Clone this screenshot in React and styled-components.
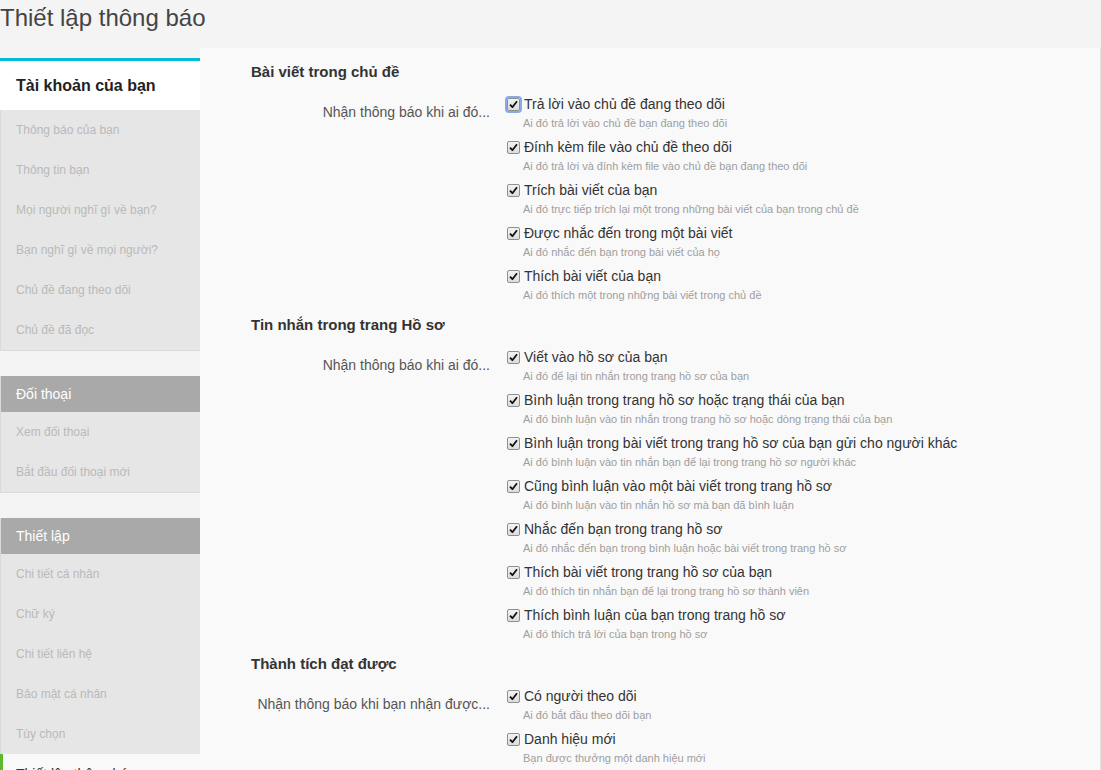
import React from "react";
import styled, { createGlobalStyle } from "styled-components";

const Global = createGlobalStyle`
  html, body { margin: 0; padding: 0; background: #f4f4f4; }
  body { font-family: "Liberation Sans", Arial, sans-serif; color: #333; }
`;

const Page = styled.div`
  width: 1101px;
`;

const Title = styled.h1`
  margin: 0;
  height: 48px;
  font-size: 24px;
  line-height: 36px;
  font-weight: normal;
  color: #444;
`;

const Body = styled.div`
  display: flex;
  align-items: flex-start;
`;

const Sidebar = styled.nav`
  width: 200px;
  flex: none;
  margin-top: 10px;
  display: flex;
  flex-direction: column;
  gap: 25px;
`;

const Group = styled.div`
  border-left: 1px solid #dadada;
  border-bottom: 1px solid #dadada;
  background: #e6e6e6;
`;

const TopTab = styled.div`
  background: #fff;
  border-top: 3px solid #00bcd4;
  height: 49px;
  line-height: 49px;
  font-size: 16px;
  font-weight: bold;
  color: #222;
  margin-left: -1px;
  padding-left: 16px;
`;

const GroupHeader = styled.div`
  background: #a9a9a9;
  height: 36px;
  line-height: 36px;
  padding-left: 15px;
  font-size: 14px;
  color: #fff;
`;

const NavItem = styled.div`
  height: 40px;
  line-height: 40px;
  color: ${(p) => (p.$active ? "#333" : "#b9b9b9")};
  background: ${(p) => (p.$active ? "#f9f9f9" : "transparent")};
  border-left: ${(p) => (p.$active ? "3px solid #5cb82e" : "none")};
  margin-left: ${(p) => (p.$active ? "-1px" : "0")};
  padding-left: ${(p) => (p.$active ? "13px" : "15px")};
  font-size: ${(p) => (p.$active ? "14px" : "12px")};
`;

const Content = styled.main`
  flex: 1;
  background: #f9f9f9;
  border-right: 1px solid #e3e3e3;
  min-height: 760px;
  padding-top: 3px;
`;

const Section = styled.section`
  padding-top: 11px;
`;

const SectionTitle = styled.h3`
  margin: 0 0 13px 51px;
  font-size: 15px;
  line-height: 20px;
  font-weight: bold;
  color: #333;
`;

const Row = styled.div`
  display: grid;
  grid-template-columns: 290px 1fr;
  column-gap: 17px;
`;

const RowLabel = styled.div`
  text-align: right;
  font-size: 14px;
  line-height: 18px;
  padding-top: 8px;
  color: #555;
`;

const Options = styled.div`
  display: flex;
  flex-direction: column;
  gap: 6px;
`;

const Option = styled.div`
  display: flex;
  flex-direction: column;
`;

const OptionLine = styled.label`
  display: flex;
  align-items: center;
  gap: 4px;
  font-size: 14px;
  line-height: 18px;
  color: #333;
`;

const Box = styled.span`
  width: 11px;
  height: 11px;
  flex: none;
  border: 1px solid #8e8f8f;
  border-radius: 2px;
  background: linear-gradient(#f3f3f3, #dcdcdc);
  display: flex;
  align-items: center;
  justify-content: center;
  box-shadow: ${(p) => (p.$focus ? "0 0 0 2px #86abe6" : "none")};
`;

const Hint = styled.div`
  margin-top: 2px;
  padding-left: 16px;
  font-size: 11px;
  line-height: 17px;
  color: #9e9e9e;
`;

const Check = () => (
  <svg width="9" height="9" viewBox="0 0 9 9">
    <path d="M1 4.6 L3.4 7.2 L8 1.2" fill="none" stroke="#111" strokeWidth="1.8" strokeLinejoin="round" />
  </svg>
);

const sections = [
  {
    title: "Bài viết trong chủ đề",
    label: "Nhận thông báo khi ai đó...",
    options: [
      ["Trả lời vào chủ đề đang theo dõi", "Ai đó trả lời vào chủ đề bạn đang theo dõi"],
      ["Đính kèm file vào chủ đề theo dõi", "Ai đó trả lời và đính kèm file vào chủ đề bạn đang theo dõi"],
      ["Trích bài viết của bạn", "Ai đó trực tiếp trích lại một trong những bài viết của bạn trong chủ đề"],
      ["Được nhắc đến trong một bài viết", "Ai đó nhắc đến bạn trong bài viết của họ"],
      ["Thích bài viết của bạn", "Ai đó thích một trong những bài viết trong chủ đề"],
    ],
  },
  {
    title: "Tin nhắn trong trang Hồ sơ",
    label: "Nhận thông báo khi ai đó...",
    options: [
      ["Viết vào hồ sơ của bạn", "Ai đó để lại tin nhắn trong trang hồ sơ của bạn"],
      ["Bình luận trong trang hồ sơ hoặc trạng thái của bạn", "Ai đó bình luận vào tin nhắn trong trang hồ sơ hoặc dòng trạng thái của bạn"],
      ["Bình luận trong bài viết trong trang hồ sơ của bạn gửi cho người khác", "Ai đó bình luận vào tin nhắn bạn để lại trong trang hồ sơ người khác"],
      ["Cũng bình luận vào một bài viết trong trang hồ sơ", "Ai đó bình luận vào tin nhắn hồ sơ mà bạn đã bình luận"],
      ["Nhắc đến bạn trong trang hồ sơ", "Ai đó nhắc đến bạn trong bình luận hoặc bài viết trong trang hồ sơ"],
      ["Thích bài viết trong trang hồ sơ của bạn", "Ai đó thích tin nhắn bạn để lại trong trang hồ sơ thành viên"],
      ["Thích bình luận của bạn trong trang hồ sơ", "Ai đó thích trả lời của bạn trong hồ sơ"],
    ],
  },
  {
    title: "Thành tích đạt được",
    label: "Nhận thông báo khi bạn nhận được...",
    options: [
      ["Có người theo dõi", "Ai đó bắt đầu theo dõi bạn"],
      ["Danh hiệu mới", "Bạn được thưởng một danh hiệu mới"],
    ],
  },
];

export default function App() {
  return (
    <Page>
      <Global />
      <Title>Thiết lập thông báo</Title>
      <Body>
        <Sidebar>
          <Group>
            <TopTab>Tài khoản của bạn</TopTab>
            {["Thông báo của bạn", "Thông tin bạn", "Mọi người nghĩ gì về bạn?", "Bạn nghĩ gì về mọi người?", "Chủ đề đang theo dõi", "Chủ đề đã đọc"].map((t) => (
              <NavItem key={t}>{t}</NavItem>
            ))}
          </Group>
          <Group>
            <GroupHeader>Đối thoại</GroupHeader>
            <NavItem>Xem đối thoại</NavItem>
            <NavItem>Bắt đầu đối thoại mới</NavItem>
          </Group>
          <Group>
            <GroupHeader>Thiết lập</GroupHeader>
            {["Chi tiết cá nhân", "Chữ ký", "Chi tiết liên hệ", "Bảo mật cá nhân", "Tùy chọn"].map((t) => (
              <NavItem key={t}>{t}</NavItem>
            ))}
            <NavItem $active>Thiết lập thông báo</NavItem>
          </Group>
        </Sidebar>
        <Content>
          {sections.map((s, si) => (
            <Section key={s.title}>
              <SectionTitle>{s.title}</SectionTitle>
              <Row>
                <RowLabel>{s.label}</RowLabel>
                <Options>
                  {s.options.map(([l, h], oi) => (
                    <Option key={l}>
                      <OptionLine>
                        <Box $focus={si === 0 && oi === 0}>
                          <Check />
                        </Box>
                        {l}
                      </OptionLine>
                      <Hint>{h}</Hint>
                    </Option>
                  ))}
                </Options>
              </Row>
            </Section>
          ))}
        </Content>
      </Body>
    </Page>
  );
}
